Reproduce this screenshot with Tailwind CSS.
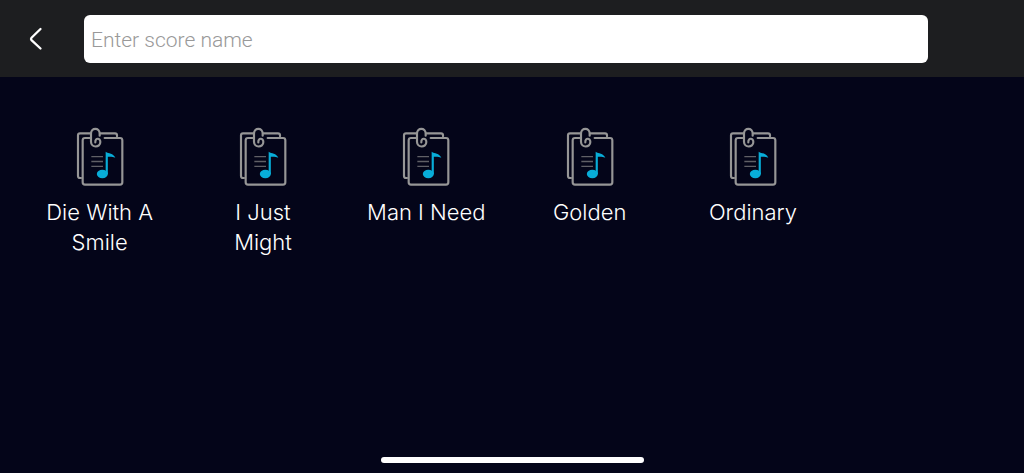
<!DOCTYPE html>
<html lang="en">
<head>
<meta charset="utf-8">
<meta name="viewport" content="width=device-width, initial-scale=1">
<title>Scores</title>
<script src="https://cdn.jsdelivr.net/npm/@tailwindcss/browser@4"></script>
</head>
<body class="flex min-h-screen flex-col bg-[#040519] font-['Inter',sans-serif] text-white">
<svg class="hidden" aria-hidden="true">
  <symbol id="score" viewBox="18 21 144 180">
    <g fill="none" stroke="#969696" stroke-width="6.5" stroke-linecap="round" stroke-linejoin="round">
      <path d="M62 40H30q-6 0-6 6V168q0 6 6 6h3"/>
      <path d="M90 40h45q6 0 6 6v3"/>
      <path d="M62 54H45q-7 0-7 7V187q0 7 7 7H150q7 0 7-7V61q0-7-7-7H104"/>
      <path d="M89 47V41C89 22 63 22 63 41V65C63 84 91 84 91 66C91 53 75 53 76 67"/>
    </g>
    <path d="M64 110H99M64 124.500H99M64 139H99" fill="none" stroke="#606066" stroke-width="4"/>
    <ellipse cx="97" cy="162" rx="16.500" ry="12.500" fill="#08add8"/>
    <path d="M107 95C116 101 130 99 136 113C127 109 120 110 113.500 110V163H107Z" fill="#08add8"/>
  </symbol>
</svg>
<header class="flex h-[77px] shrink-0 items-center bg-[#1d1e20] pr-24 pl-4">
  <button type="button" aria-label="Back" class="mr-7 flex size-10 shrink-0 items-center justify-center">
    <svg class="size-6" viewBox="0 0 24 24" fill="none" stroke="white" stroke-width="2.3" stroke-linecap="round" stroke-linejoin="round" aria-hidden="true"><path d="M16.500 2L7.500 10.800Q6.500 12 7.500 13.200L16.500 21.500"/></svg>
  </button>
  <input type="text" aria-label="Score name" placeholder="Enter score name" class="h-12 min-w-0 flex-1 rounded-md bg-white px-[7px] pt-0.5 font-['Roboto',sans-serif] text-[21px] font-light text-black outline-none placeholder:text-[#999999]">
</header>
<main class="flex-1 pt-[50px] pr-[26px] pl-[18px]">
  <ul class="grid grid-cols-6 text-center text-[22px] leading-[30px] font-light">
    <li><a href="#" class="flex flex-col items-center gap-[10px] px-6"><svg class="h-[60px] w-12" aria-hidden="true"><use href="#score"/></svg><span>Die With A Smile</span></a></li>
    <li><a href="#" class="flex flex-col items-center gap-[10px] px-10"><svg class="h-[60px] w-12" aria-hidden="true"><use href="#score"/></svg><span>I Just Might</span></a></li>
    <li><a href="#" class="flex flex-col items-center gap-[10px] px-5"><svg class="h-[60px] w-12" aria-hidden="true"><use href="#score"/></svg><span>Man I Need</span></a></li>
    <li><a href="#" class="flex flex-col items-center gap-[10px] px-6"><svg class="h-[60px] w-12" aria-hidden="true"><use href="#score"/></svg><span>Golden</span></a></li>
    <li><a href="#" class="flex flex-col items-center gap-[10px] px-6"><svg class="h-[60px] w-12" aria-hidden="true"><use href="#score"/></svg><span>Ordinary</span></a></li>
  </ul>
</main>
<footer class="flex justify-center pb-[10px]"><div class="h-1.5 w-[263px] rounded-full bg-white"></div></footer>
</body>
</html>
